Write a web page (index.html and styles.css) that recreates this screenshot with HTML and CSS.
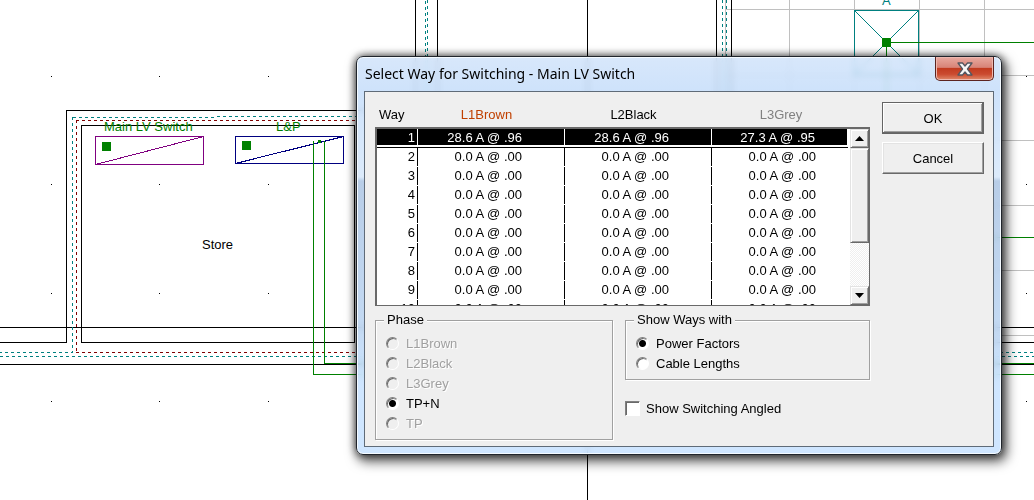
FILE: index.html
```html
<!DOCTYPE html>
<html lang="en">
<head>
<meta charset="utf-8">
<title>Select Way for Switching - Main LV Switch</title>
<link rel="stylesheet" href="styles.css">
</head>
<body>
<main class="desktop">
<svg class="plan" aria-label="Floor plan" shape-rendering="crispEdges">
  <defs>
    <g id="dots"><path d="M51 0h1M159 0h1M268 0h1M376 0h1M485 0h1M593 0h1M701 0h1M1026 0h1" stroke="#000"/></g>
  </defs>
  <use href="#dots" y="76.5"/><use href="#dots" y="184.5"/><use href="#dots" y="293.5"/><use href="#dots" y="401.5"/>
  <g fill="none">
    <path stroke="#c0c0c0" d="M725.5 0V334M789.5 0V335M854.5 0V335M919.5 0V335M984.5 0V335M725 9.5H3000M725 75.5H3000M725 140.5H3000M725 205.5H3000M725 270.5H3000M725 335.5H3000"/>
    <path stroke="#000" d="M415 110.5H66.5V342.5H0M81.5 125.5H354.5V342.5H81.5zM0 327.5H3000M0 364.5H3000M415.5 0V110M437.5 0V110M587.5 0V3000M716.5 0V327M731.5 0V327M900 342.5H3000"/>
    <path stroke="#008080" stroke-dasharray="3 3" d="M217 116.5H356M72.5 117.5H217M72.5 117V352.5H0M0 356.5H3000M427.5 0V110M722.5 0V350M726.5 0V350M1000 352.5H3000"/>
    <path stroke="#008080" stroke-dasharray="3 3" d="M425.5 1V110"/>
    <path stroke="#800000" stroke-dasharray="3 3" d="M76 120.5H356M76.5 120V352M76 352.5H356"/>
    <path stroke="#800080" d="M95.5 136.5H203.5V164.5H95.5zM95.5 164.5L203.5 136.5"/>
    <path stroke="#000080" d="M235.5 136.5H343.5V163.5H235.5zM235.5 163.5L343.5 136.5"/>
    <path stroke="#008080" d="M854.5 10.5H918.5V74.5H854.5zL918.5 74.5M918.5 10.5L854.5 74.5"/>
    <path stroke="#008000" d="M313.5 141V374.5H3000M324.5 141V363.5H3000M886.5 42V237.5M886 42.5H3000M886 237.5H3000"/>
  </g>
  <path fill="#008000" d="M102 142h9v9h-9zM242 141h9v9h-9zM318 140h3v3h-3zM882 38h9v9h-9z"/>
  <g class="plan-text">
    <text x="104" y="131" fill="#008000">Main LV Switch</text>
    <text x="276" y="131" fill="#008000">L&amp;P</text>
    <text x="202" y="249" fill="#000">Store</text>
    <text x="882" y="5" fill="#008080">A</text>
  </g>
</svg>

<section class="window" role="dialog" aria-labelledby="title">
  <header class="titlebar">
    <h1 id="title">Select Way for Switching - Main LV Switch</h1>
    <button class="close" aria-label="Close">
      <svg width="18" height="14" viewBox="0 0 18 14"><path d="M2 1h4.500l2.500 3 2.500-3H16l-4.500 6L16 13h-4.500L9 10l-2.500 3H2l4.500-6z" fill="#f6f6f6" stroke="#54565f" stroke-width="1.300" stroke-linejoin="round"/></svg>
    </button>
  </header>
  <form class="client">
    <div class="list">
      <table class="ways">
        <thead><tr><th>Way</th><th class="brown">L1Brown</th><th>L2Black</th><th class="grey">L3Grey</th></tr></thead>
        <tbody>
          <tr class="selected"><td>1</td><td>28.6 A @ .96</td><td>28.6 A @ .96</td><td>27.3 A @ .95</td></tr>
          <tr><td>2</td><td>0.0 A @ .00</td><td>0.0 A @ .00</td><td>0.0 A @ .00</td></tr>
          <tr><td>3</td><td>0.0 A @ .00</td><td>0.0 A @ .00</td><td>0.0 A @ .00</td></tr>
          <tr><td>4</td><td>0.0 A @ .00</td><td>0.0 A @ .00</td><td>0.0 A @ .00</td></tr>
          <tr><td>5</td><td>0.0 A @ .00</td><td>0.0 A @ .00</td><td>0.0 A @ .00</td></tr>
          <tr><td>6</td><td>0.0 A @ .00</td><td>0.0 A @ .00</td><td>0.0 A @ .00</td></tr>
          <tr><td>7</td><td>0.0 A @ .00</td><td>0.0 A @ .00</td><td>0.0 A @ .00</td></tr>
          <tr><td>8</td><td>0.0 A @ .00</td><td>0.0 A @ .00</td><td>0.0 A @ .00</td></tr>
          <tr><td>9</td><td>0.0 A @ .00</td><td>0.0 A @ .00</td><td>0.0 A @ .00</td></tr>
          <tr><td>10</td><td>0.0 A @ .00</td><td>0.0 A @ .00</td><td>0.0 A @ .00</td></tr>
        </tbody>
      </table>
      <div class="scrollbar">
        <button type="button" class="arrow" aria-label="Scroll up"><svg width="9" height="5"><path d="M0 5L4.500 0L9 5z"/></svg></button>
        <div class="thumb"></div>
        <div class="track"></div>
        <button type="button" class="arrow" aria-label="Scroll down"><svg width="9" height="5"><path d="M0 0L4.500 5L9 0z"/></svg></button>
      </div>
    </div>
    <div class="actions">
      <button type="button" class="push default">OK</button>
      <button type="button" class="push">Cancel</button>
    </div>
    <div class="options">
      <fieldset class="group phase">
        <legend>Phase</legend>
        <label class="off"><input type="radio" name="phase" disabled>L1Brown</label>
        <label class="off"><input type="radio" name="phase" disabled>L2Black</label>
        <label class="off"><input type="radio" name="phase" disabled>L3Grey</label>
        <label><input type="radio" name="phase" checked>TP+N</label>
        <label class="off"><input type="radio" name="phase" disabled>TP</label>
      </fieldset>
      <div class="side">
        <fieldset class="group">
          <legend>Show Ways with</legend>
          <label><input type="radio" name="show" checked>Power Factors</label>
          <label><input type="radio" name="show">Cable Lengths</label>
        </fieldset>
        <label class="check"><input type="checkbox">Show Switching Angled</label>
      </div>
    </div>
  </form>
</section>
</main>
</body>
</html>
```
FILE: styles.css
```css
* { box-sizing: border-box; }
body { margin: 0; background: #fff; overflow: hidden; font-family: "Liberation Sans", Arial, sans-serif; font-size: 13px; color: #000; }
.desktop { position: relative; min-height: 100vh; }
.plan { position: absolute; inset: 0; width: 100%; height: 100%; }
.plan-text { font-size: 13px; }

.window {
  position: absolute; left: 356px; right: 32px; top: 56px;
  padding: 0 7px 7px; border: 1px solid #20252c; border-radius: 7px;
  background: linear-gradient(#cfe2fad0 0, #c3dcfad0 34px, #d4e6fad0 120px, #a8c2e2d0 124px, #b6d1f0d0 270px, #c4e0ffd0 330px);
  backdrop-filter: blur(3px);
  box-shadow: inset 0 0 0 1px #f4faff, 0 0 9px rgba(0,0,0,.7), 3px 5px 12px 2px rgba(0,0,0,.6);
}
.titlebar { display: flex; justify-content: space-between; align-items: flex-start; height: 34px; }
.titlebar h1 { margin: 0 0 0 1px; font: 14px/34px "Noto Sans", "Open Sans", sans-serif; }
.close {
  width: 59px; height: 24px; padding: 0; display: flex; align-items: center; justify-content: center;
  border: 1px solid #5c2420; border-top: 0; border-radius: 0 0 5px 5px;
  background: linear-gradient(#e8aaa0 0, #d88478 45%, #c23b20 50%, #cb4b30 75%, #e08b6c 100%);
  box-shadow: inset 0 0 0 1px #eeb9b0;
}
.client {
  display: grid; grid-template-columns: minmax(0, 1fr) 102px; column-gap: 12px; row-gap: 6px;
  padding: 10px 9px 6px 10px; border: 1px solid #5f6b78; background: #efefef;
}
.list { display: grid; grid-template-columns: 1fr 20px; }
.ways { display: block; grid-area: 1 / 1 / 2 / 3; }
.ways thead { display: block; }
.ways tr { display: grid; grid-template-columns: 43px 147px 147px 1fr; }
.ways th { font-weight: 400; line-height: 25px; padding: 0 10px 0 0; }
.ways th:first-child { text-align: left; padding: 0 0 0 4px; }
.ways th:last-child { padding-right: 20px; }
.brown { color: #c04000; }
.grey { color: #808080; }
.ways tbody {
  display: block; height: 179px; overflow: hidden; padding-right: 21px;
  border: 1px solid #696969; border-width: 2px 1px 1px 2px; background: #fff;
}
.ways tbody tr { grid-template-columns: 41px 147px 147px 1fr; height: 19px; }
.ways td { padding: 0 42px 0 0; height: 18px; line-height: 18px; text-align: right; border-right: 1px solid #000; }
.ways td:first-child { padding-right: 2px; }
.ways td:last-child { padding-right: 32px; border: 0; }
.ways .selected { color: #fff; box-shadow: 0 1px #000; height: 18px; margin-bottom: 1px; border-right: 1px solid #fff; }
.ways .selected td { height: 16px; line-height: 17px; background: #000; border-color: #fff; }
.scrollbar { grid-area: 1 / 2; align-self: end; display: flex; flex-direction: column; height: 176px; margin: 0 1px 1px 0; }
.arrow, .thumb { border: 1px solid #fff; border-color: #e3e3e3 #696969 #696969 #e3e3e3; background: #efefef; box-shadow: inset 1px 1px #fff, inset -1px -1px #a0a0a0; }
.arrow { display: flex; align-items: center; justify-content: center; height: 19px; padding: 0; }
.thumb { height: 95px; }
.track { flex: 1; background: repeating-conic-gradient(#fff 0 25%, #efefef 0 50%) 0 0 / 2px 2px; }
.actions { display: flex; flex-direction: column; gap: 8px; }
.push {
  height: 32px; padding: 0; font: inherit; background: #efefef; border: 1px solid #fff; border-color: #fff #696969 #696969 #fff;
  box-shadow: inset -1px -1px #a0a0a0, inset 1px 1px #e3e3e3;
}
.push.default { border: 1px solid #646464; box-shadow: inset -1px -1px #696969, inset 1px 1px #fff, inset -2px -2px #a0a0a0; }
.options { display: grid; grid-template-columns: 238px minmax(0, 1fr); gap: 12px; }
.side { display: flex; flex-direction: column; gap: 18px; }
.group { min-width: 0; margin: 0; padding: 5px 10px 6px; border: 1px solid #a0a0a0; box-shadow: 1px 1px #fff, inset 1px 1px #fff; }
.group legend { margin-left: -2px; padding: 0 3px; line-height: 16px; background: #efefef; }
.group label, .check { display: flex; align-items: center; height: 20px; gap: 7px; }
.off { color: #a0a0a0; text-shadow: 1px 1px #fff; }
input { appearance: none; flex: none; width: 13px; height: 13px; margin: 0; background: #fff; border: 1px solid #808080; border-color: #808080 #fff #fff #808080; box-shadow: inset 1px 1px #696969; }
input[type="radio"] { border-radius: 50%; }
input[type="radio"]:checked { background: radial-gradient(circle, #000 3px, #fff 4px); }
input:disabled { background: #efefef; }
.check input { width: 15px; height: 15px; }
.check { gap: 6px; }
```
